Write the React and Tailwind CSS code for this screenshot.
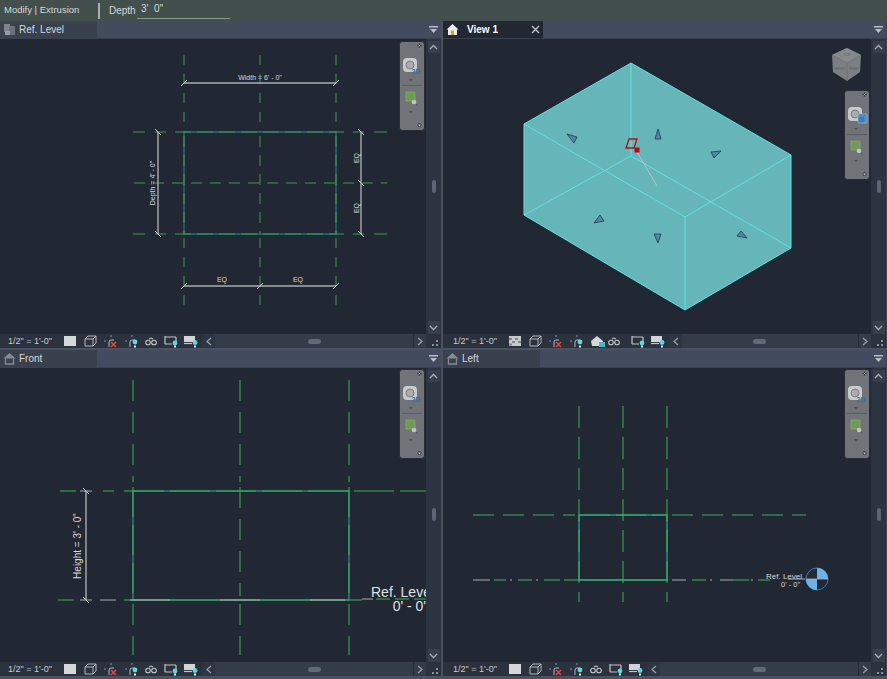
const GREEN = '#3d9a4e';
const BRIGHT = '#3cb356';
const TEAL = '#2a8b9c';
const DIM = '#a9acb0';

function Seg({ x1, y1, x2, y2, color = GREEN, dash, w = 1 }) {
  return <line x1={x1} y1={y1} x2={x2} y2={y2} stroke={color} strokeWidth={w} strokeDasharray={dash} />;
}

function Tick({ x, y }) {
  return <line x1={x - 3} y1={y + 3} x2={x + 3} y2={y - 3} stroke="#c8cacc" strokeWidth="1" />;
}

function TickB({ x, y }) {
  return <line x1={x - 3} y1={y - 3} x2={x + 3} y2={y + 3} stroke="#c8cacc" strokeWidth="1" />;
}

function DimLabel({ x, y, children, rotate, size = 7 }) {
  return (
    <text
      x={x}
      y={y}
      fill="#d6d8da"
      fontSize={size}
      textAnchor="middle"
      fontFamily="'Liberation Sans', sans-serif"
      transform={rotate ? `rotate(-90 ${x} ${y})` : undefined}
    >
      {children}
    </text>
  );
}

function RefLevelPlan() {
  return (
    <svg className="absolute inset-0 w-full h-full" viewBox="0 39 426 295">
      <rect x="184" y="132" width="152" height="102" fill="none" stroke={TEAL} strokeWidth="1" />
      {[184, 260, 336].map((x) => (
        <g key={x}>
          <Seg x1={x} y1={55} x2={x} y2={132} dash="10 9" />
          <Seg x1={x} y1={136} x2={x} y2={234} dash="11 8" />
          <Seg x1={x} y1={238} x2={x} y2={310} dash="10 9" />
        </g>
      ))}
      <Seg x1={133} y1={132} x2={145} y2={132} />
      <Seg x1={155} y1={132} x2={166} y2={132} />
      <Seg x1={175} y1={132} x2={344} y2={132} dash="16 6" />
      <Seg x1={353} y1={132} x2={364} y2={132} />
      <Seg x1={374} y1={132} x2={387} y2={132} />
      <Seg x1={134} y1={183} x2={387} y2={183} dash="11 8" />
      <Seg x1={133} y1={234} x2={145} y2={234} />
      <Seg x1={155} y1={234} x2={166} y2={234} />
      <Seg x1={175} y1={234} x2={344} y2={234} dash="16 6" />
      <Seg x1={353} y1={234} x2={364} y2={234} />
      <Seg x1={374} y1={234} x2={387} y2={234} />

      <Seg x1={184} y1={83} x2={336} y2={83} color={DIM} w={1.4} />
      <Tick x={184} y={83} />
      <Tick x={336} y={83} />
      <DimLabel x={260} y={80}>Width = 6' - 0"</DimLabel>

      <Seg x1={158} y1={132} x2={158} y2={234} color={DIM} w={1.4} />
      <TickB x={158} y={132} />
      <TickB x={158} y={234} />
      <DimLabel x={155} y={183} rotate>Depth = 4' - 0"</DimLabel>

      <Seg x1={361} y1={132} x2={361} y2={234} color={DIM} w={1.4} />
      <TickB x={361} y={132} />
      <TickB x={361} y={183} />
      <TickB x={361} y={234} />
      <DimLabel x={359} y={158} rotate>EQ</DimLabel>
      <DimLabel x={359} y={208} rotate>EQ</DimLabel>

      <Seg x1={184} y1={286} x2={336} y2={286} color={DIM} w={1.4} />
      <Tick x={184} y={286} />
      <Tick x={260} y={286} />
      <Tick x={336} y={286} />
      <DimLabel x={222} y={282}>EQ</DimLabel>
      <DimLabel x={298} y={282}>EQ</DimLabel>
    </svg>
  );
}

function Arrow({ points }) {
  return <polygon points={points} fill="#4f88a6" stroke="#263a48" strokeWidth="0.8" />;
}

function Iso() {
  const edge = '#5fe3e3';
  return (
    <svg className="absolute inset-0 w-full h-full" viewBox="443 39 428 295">
      <polygon points="631,63 791,155 791,248 685,310 524,215 524,124" fill="#66b5b9" />
      <g stroke={edge} strokeWidth="1" fill="none">
        <polygon points="631,63 791,155 791,248 685,310 524,215 524,124" />
        <polyline points="524,124 685,217 791,155" />
        <line x1="685" y1="217" x2="685" y2="310" />
        <line x1="631" y1="63" x2="631" y2="156" />
        <line x1="631" y1="156" x2="524" y2="215" />
        <line x1="631" y1="156" x2="791" y2="248" />
      </g>
      <Arrow points="567,134 577,137 574,143" />
      <Arrow points="658,129 661,139 655,139" />
      <Arrow points="711,152 721,151 714,158" />
      <Arrow points="600,215 604,221 594,223" />
      <Arrow points="654,234 661,234 658,243" />
      <Arrow points="741,231 747,238 737,236" />
      <line x1="637" y1="152" x2="657" y2="186" stroke="#b9c4c6" strokeWidth="1" />
      <polygon points="629,139 637,139 634,148 626,148" fill="none" stroke="#b01217" strokeWidth="1.3" />
      <rect x="634.5" y="147.5" width="5" height="5" fill="#b5080f" />
      {/* view cube */}
      <polygon points="847,48 861,55 860,72 847,81 833,72 832,55" fill="#7c8084" />
      <polygon points="847,48 861,55 847,63 832,55" fill="#85888c" />
      <line x1="832" y1="55" x2="847" y2="63" stroke="#64686c" strokeWidth="0.6" />
      <line x1="861" y1="55" x2="847" y2="63" stroke="#64686c" strokeWidth="0.6" />
      <line x1="847" y1="63" x2="847" y2="81" stroke="#64686c" strokeWidth="0.6" />
      <text x="847" y="56" fill="#5f6367" fontSize="3.500" textAnchor="middle" fontFamily="'Liberation Sans', sans-serif">TOP</text>
      <text x="840" y="70" fill="#55595d" fontSize="3" textAnchor="middle" fontFamily="'Liberation Sans', sans-serif">FRONT</text>
      <text x="854" y="70" fill="#55595d" fontSize="3" textAnchor="middle" fontFamily="'Liberation Sans', sans-serif">RIGHT</text>
    </svg>
  );
}

function Front() {
  return (
    <svg className="absolute inset-0 w-full h-full" viewBox="0 368 426 294">
      <rect x="133" y="491" width="216" height="109" fill="none" stroke="#2ea7a8" strokeWidth="1" />
      {[133, 240, 349].map((x) => (
        <g key={x}>
          <Seg x1={x} y1={380} x2={x} y2={482} dash="21 11" color={BRIGHT} />
          <Seg x1={x} y1={487} x2={x} y2={596} dash={x === 240 ? '21 11' : '30 8'} color={BRIGHT} />
          <Seg x1={x} y1={604} x2={x} y2={655} dash="21 11" color={BRIGHT} />
        </g>
      ))}
      <Seg x1={60} y1={491} x2={76} y2={491} color={BRIGHT} />
      <Seg x1={80} y1={491} x2={92} y2={491} color={DIM} />
      <Seg x1={103} y1={491} x2={114} y2={491} color={BRIGHT} />
      <Seg x1={124} y1={491} x2={426} y2={491} color={BRIGHT} dash="40 6" />
      <Seg x1={58} y1={600} x2={74} y2={600} color={BRIGHT} />
      <Seg x1={80} y1={600} x2={92} y2={600} color={DIM} />
      <Seg x1={100} y1={600} x2={116} y2={600} color={DIM} />
      <Seg x1={124} y1={600} x2={362} y2={600} color={BRIGHT} />
      <Seg x1={130} y1={600} x2={345} y2={600} color={DIM} dash="40 50" />
      <Seg x1={362} y1={599} x2={373} y2={599} color={DIM} />
      <Seg x1={376} y1={599} x2={426} y2={599} color={BRIGHT} dash="14 5" />

      <Seg x1={86} y1={491} x2={86} y2={600} color={DIM} w={1.4} />
      <TickB x={86} y={491} />
      <TickB x={86} y={600} />
      <DimLabel x={81} y={546} rotate size={10}>Height = 3' - 0"</DimLabel>

      <text x="371" y="597" fill="#dfe1e2" fontSize="14" fontFamily="'Liberation Sans', sans-serif">Ref. Level</text>
      <text x="426" y="611" fill="#dfe1e2" fontSize="14" textAnchor="end" fontFamily="'Liberation Sans', sans-serif">0' - 0'</text>
    </svg>
  );
}

function LeftView() {
  return (
    <svg className="absolute inset-0 w-full h-full" viewBox="443 368 428 294">
      <rect x="579" y="515" width="88" height="65" fill="none" stroke="#2fc0b0" strokeWidth="1" />
      {[579, 623, 667].map((x) => (
        <Seg key={x} x1={x} y1={406} x2={x} y2={602} dash="22 9" color={BRIGHT} />
      ))}
      <Seg x1={473} y1={515} x2={575} y2={515} dash="21 9" color={BRIGHT} />
      <Seg x1={580} y1={515} x2={667} y2={515} dash="30 6" color={BRIGHT} />
      <Seg x1={672} y1={515} x2={806} y2={515} dash="21 9" color={BRIGHT} />
      <Seg x1={473} y1={580} x2={490} y2={580} color={DIM} />
      <Seg x1={494} y1={580} x2={506} y2={580} color={BRIGHT} />
      <Seg x1={510} y1={580} x2={512} y2={580} color={DIM} />
      <Seg x1={518} y1={580} x2={532} y2={580} color={BRIGHT} />
      <Seg x1={536} y1={580} x2={538} y2={580} color={DIM} />
      <Seg x1={544} y1={580} x2={560} y2={580} color={BRIGHT} />
      <Seg x1={564} y1={580} x2={668} y2={580} color={BRIGHT} />
      <Seg x1={672} y1={580} x2={686} y2={580} color={DIM} />
      <Seg x1={692} y1={580} x2={706} y2={580} color={BRIGHT} />
      <Seg x1={710} y1={580} x2={712} y2={580} color={DIM} />
      <Seg x1={720} y1={580} x2={733} y2={580} color={DIM} />
      <Seg x1={733} y1={580} x2={749} y2={580} color={BRIGHT} />
      <Seg x1={751} y1={580} x2={753} y2={580} color={DIM} />
      <Seg x1={758} y1={580} x2={770} y2={580} color={BRIGHT} />
      <text x="766" y="579" fill="#d6d8da" fontSize="8" fontFamily="'Liberation Sans', sans-serif">Ref. Level</text>
      <text x="781" y="587" fill="#d6d8da" fontSize="7.5" fontFamily="'Liberation Sans', sans-serif">0' - 0"</text>
      <Seg x1={788} y1={579} x2={805} y2={579} color={DIM} />
      <circle cx="817" cy="579" r="11" fill="#222834" stroke="#3e7cab" strokeWidth="1" />
      <path d="M817 579 V568 A11 11 0 0 1 828 579 Z" fill="#6fb2ea" />
      <path d="M817 579 V590 A11 11 0 0 1 806 579 Z" fill="#6fb2ea" />
      <line x1="806" y1="579" x2="828" y2="579" stroke="#aab0b6" strokeWidth="0.8" />
    </svg>
  );
}

function NavBar({ cube }) {
  return (
    <svg width="27" height="90" viewBox="0 0 27 90">
      <rect x="0.5" y="0.5" width="25" height="89" rx="3" fill="#707377" stroke="#2a2d33" />
      <circle cx="20.5" cy="4.5" r="2.6" fill="#3b3e44" stroke="#8f9296" strokeWidth="0.6" />
      <path d="M19.3 3.3 L21.7 5.7 M21.7 3.3 L19.3 5.7" stroke="#c9cbcd" strokeWidth="0.6" />
      <rect x="4" y="17" width="14" height="14" rx="4" fill="#c9cacb" />
      <circle cx="11" cy="24" r="4" fill="#a9abae" stroke="#7d8084" strokeWidth="1" />
      {cube ? (
        <g>
          <rect x="14" y="24" width="9" height="9" rx="1" fill="#3f7bb8" stroke="#9cc0e2" strokeWidth="0.7" />
          <path d="M14 26 H21 V33" fill="none" stroke="#89b2d8" strokeWidth="0.6" />
        </g>
      ) : (
        <text x="12.5" y="33" fill="#2f6fb2" fontSize="7" fontWeight="700" fontFamily="'Liberation Sans', sans-serif">2D</text>
      )}
      <path d="M10 38 L14 38 L12 40.5 Z" fill="#4b4e52" />
      <line x1="3" y1="44.5" x2="23" y2="44.5" stroke="#595c61" />
      <rect x="7" y="51" width="9" height="9" fill="#6e9a55" stroke="#8eb573" strokeWidth="0.6" />
      <circle cx="15" cy="61" r="2.3" fill="#c2c4c6" />
      <line x1="17" y1="63" x2="18.5" y2="64.5" stroke="#44474b" strokeWidth="0.8" />
      <path d="M10 70 L14 70 L12 72.5 Z" fill="#4b4e52" />
      <circle cx="20.5" cy="84" r="2.6" fill="#3b3e44" stroke="#8f9296" strokeWidth="0.6" />
      <path d="M19 83.5 H22 L20.5 85.5 Z" fill="#c9cbcd" />
    </svg>
  );
}

function Dot({ cx, cy }) {
  return <circle cx={cx} cy={cy} r="2.4" fill="#5fd6e8" />;
}

function CropMark({ x }) {
  return (
    <g fill="none" strokeWidth="1" transform={`translate(${x} 0)`}>
      <path d="M0 7 H3 M7 1 V4" stroke="#5aa8d8" strokeDasharray="2 1" />
      <path d="M5 13 V8 Q5 6 7 6 H10" stroke="#b4b8bc" />
    </g>
  );
}

function StatusBar({ checker, lock, thumbClass, textPad }) {
  return (
    <div className={`h-[14px] flex items-center bg-[#2b313d] text-[10px] leading-none text-[#c9ccd2] ${textPad}`}>
      <span className="w-[50px] shrink-0 whitespace-nowrap text-[9px] font-['Liberation_Sans',sans-serif]">1/2" = 1'-0"</span>
      <svg width={lock ? 166 : 144} height="14" viewBox={lock ? '0 0 166 14' : '0 0 144 14'} className="shrink-0">
        {checker ? (
          <g>
            <rect x="6" y="2" width="12" height="10" fill="#c8c9ca" />
            <path d="M6 4h3v2H6zM12 4h3v2h-3zM9 7h3v2H9zM15 7h3v2h-3zM6 9.500h3v2H6z" fill="#85888b" />
          </g>
        ) : (
          <rect x="6" y="2" width="12" height="10" fill="#d6d7d8" />
        )}
        <path d="M27 5 L30 2 H38 V9 L35 12 H27 Z M27 5 H35 V12 M35 5 L38 2" fill="none" stroke="#b5b8bc" strokeWidth="1" />
        <CropMark x={46} />
        <path d="M53 8 L58 13 M58 8 L53 13" stroke="#e2473a" strokeWidth="1.600" />
        <CropMark x={67} />
        <Dot cx={77} cy={8} />
        <rect x="76" y="11.500" width="2" height="2" fill="#e6e7e8" />
        {lock ? (
          <g>
            <path d="M88 7 L94 2 L100 7 V12 H89 Z" fill="#d5d6d7" />
            <rect x="96" y="8" width="6" height="5" fill="#45b7c7" />
          </g>
        ) : null}
        <g fill="none" stroke="#c2c5c8" strokeWidth="1.100" transform={lock ? 'translate(18 0)' : undefined}>
          <circle cx="90" cy="8.500" r="2.300" />
          <circle cx="96" cy="8.500" r="2.300" />
          <path d="M91 5 L93 4 L95 5" />
        </g>
        <g transform={lock ? 'translate(22 0)' : undefined}>
          <path d="M107 3 H118 M107 2 V10 M118 3 V7 M107 10 H114" fill="none" stroke="#c2c5c8" strokeWidth="1.200" />
          <Dot cx={117} cy={9} />
          <rect x="116" y="11.500" width="2" height="2" fill="#e6e7e8" />
        </g>
        <g transform={lock ? 'translate(22 0)' : undefined}>
          <rect x="126" y="2" width="11" height="6" fill="#d2d3d5" />
          <path d="M126 9.500 H134" stroke="#c2c5c8" strokeWidth="1.200" />
          <Dot cx={137} cy={8.500} />
          <rect x="136" y="11.500" width="2" height="2" fill="#e6e7e8" />
        </g>
      </svg>
      <div className="w-[13px] h-full flex items-center justify-center bg-[#2f3643]">
        <svg width="6" height="9" viewBox="0 0 6 9"><path d="M5 1 L1 4.500 L5 8" fill="none" stroke="#9aa0aa" strokeWidth="1.300" /></svg>
      </div>
      <div className="flex-1 h-full flex items-center bg-[#343b49]">
        <div className={`h-[5px] w-[13px] rounded-sm bg-[#616877] ${thumbClass}`} />
      </div>
      <div className="w-[13px] h-full flex items-center justify-center bg-[#343b49] border-l border-[#262b35]">
        <svg width="6" height="9" viewBox="0 0 6 9"><path d="M1 1 L5 4.500 L1 8" fill="none" stroke="#9aa0aa" strokeWidth="1.300" /></svg>
      </div>
      <div className="w-[15px] h-full flex items-end justify-end pr-[3px] pb-[2px] bg-[#2b313d]">
        <svg width="6" height="6" viewBox="0 0 6 6" fill="#8b909a"><rect x="4" y="0" width="2" height="2" /><rect x="0" y="4" width="2" height="2" /><rect x="4" y="4" width="2" height="2" /></svg>
      </div>
    </div>
  );
}

function VScroll({ thumbTop }) {
  return (
    <div className="w-[15px] shrink-0 flex flex-col items-center bg-[#2d3441]">
      <div className="w-[12px] h-[12px] mt-[2px] flex items-center justify-center bg-[#373e4c]">
        <svg width="9" height="6" viewBox="0 0 9 6"><path d="M1 5 L4.500 1.500 L8 5" fill="none" stroke="#a8adb6" strokeWidth="1.300" /></svg>
      </div>
      <div className={`w-[4px] h-[13px] rounded-sm bg-[#5d6473] ${thumbTop}`} />
      <div className="mt-auto w-[12px] h-[13px] flex items-center justify-center bg-[#373e4c]">
        <svg width="9" height="6" viewBox="0 0 9 6"><path d="M1 1 L4.500 4.500 L8 1" fill="none" stroke="#a8adb6" strokeWidth="1.300" /></svg>
      </div>
    </div>
  );
}

function HouseIcon({ active }) {
  return active ? (
    <svg width="13" height="13" viewBox="0 0 13 13">
      <path d="M0.500 6.500 L6.500 1 L12.500 6.500 H11 V12 H2 V6.500 Z" fill="#eceded" />
      <rect x="5" y="7.500" width="3" height="4.500" fill="#d9a520" />
    </svg>
  ) : (
    <svg width="13" height="13" viewBox="0 0 13 13">
      <path d="M0.500 6.500 L6.500 1 L12.500 6.500 Z" fill="#878c94" />
      <path d="M2.500 6.500 V12 H10.500 V6.500" fill="none" stroke="#878c94" strokeWidth="1.300" />
    </svg>
  );
}

function PlanIcon() {
  return (
    <svg width="13" height="13" viewBox="0 0 13 13" fill="#7f848c">
      <rect x="1" y="1" width="6" height="8" />
      <rect x="6" y="3" width="6" height="9" fill="#6c717a" />
      <rect x="2" y="8" width="5" height="4" fill="#979ba2" />
    </svg>
  );
}

function Pane({ title, icon, active, children, nav, navClass, checker, lock, thumbClass, thumbTop, right }) {
  return (
    <div className={`flex flex-col min-h-0 bg-[#222833] ${right ? 'border-r border-[#3a4150]' : ''}`}>
      <div className="h-[18px] shrink-0 flex bg-[#434c5e] border-b border-[#39404e]">
        <div className={`flex items-center pl-[3px] gap-[3px] text-[10px] font-['Liberation_Sans',sans-serif] ${active ? 'w-[100px] bg-[#222833] text-white font-bold gap-[8px]' : 'w-[97px] bg-[#39404e] text-[#d5d8dd]'}`}>
          <span className="flex">{icon}</span>
          <span>{title}</span>
          {active && (
            <svg className="ml-auto mr-[3px]" width="9" height="9" viewBox="0 0 9 9"><path d="M1 1 L8 8 M8 1 L1 8" stroke="#c5c8cd" strokeWidth="1.300" /></svg>
          )}
        </div>
        <div className="ml-auto w-[15px] flex items-center justify-center">
          <svg width="9" height="7" viewBox="0 0 9 7"><rect x="0" y="0" width="9" height="1.500" fill="#b9bdc5" /><path d="M1 3 H8 L4.500 7 Z" fill="#b9bdc5" /></svg>
        </div>
      </div>
      <div className="flex-1 min-h-0 flex">
        <div className="flex-1 relative overflow-hidden">
          {children}
          <div className={`absolute flex ${navClass}`}><NavBar cube={nav === 'cube'} /></div>
        </div>
        <VScroll thumbTop={thumbTop} />
      </div>
      <StatusBar checker={checker} lock={lock} thumbClass={thumbClass} textPad={right ? 'pl-[10px]' : 'pl-2'} />
    </div>
  );
}

export default function App() {
  return (
    <div className="w-[887px] h-[679px] overflow-hidden bg-[#4a5262] font-['Liberation_Sans',sans-serif]">
      {/* Options bar */}
      <div className="h-[21px] flex items-center bg-[#434f4d] text-[10px] text-[#d4d9d7]">
        <span className="ml-[4px] w-[94px] whitespace-nowrap text-[9.5px]">Modify | Extrusion</span>
        <span className="w-[2px] h-[16px] bg-[#a9afad]" />
        <span className="ml-[9px] w-[28px]">Depth</span>
        <div className="w-[93px] h-[18px] border-b border-[#7f9a8c] pl-[4px] mb-[1px] leading-[16px]">3'&nbsp;&nbsp;0"</div>
      </div>

      {/* Viewports */}
      <div className="grid grid-cols-[441px_444px] grid-rows-[327px_326px] gap-[2px]">
        <Pane title="Ref. Level" icon={<PlanIcon />} navClass="top-[2px] left-[399px]" thumbClass="ml-[93px]" thumbTop="mt-[127px]">
          <RefLevelPlan />
        </Pane>
        <Pane title="View 1" icon={<HouseIcon active />} active nav="cube" navClass="top-[51px] left-[401px]" checker lock right thumbClass="ml-[71px]" thumbTop="mt-[127px]">
          <Iso />
        </Pane>
        <Pane title="Front" icon={<HouseIcon />} navClass="top-[1px] left-[399px]" thumbClass="ml-[93px]" thumbTop="mt-[126px]">
          <Front />
        </Pane>
        <Pane title="Left" icon={<HouseIcon />} navClass="top-[1px] left-[401px]" right thumbClass="ml-[93px]" thumbTop="mt-[126px]">
          <LeftView />
        </Pane>
      </div>
    </div>
  );
}
